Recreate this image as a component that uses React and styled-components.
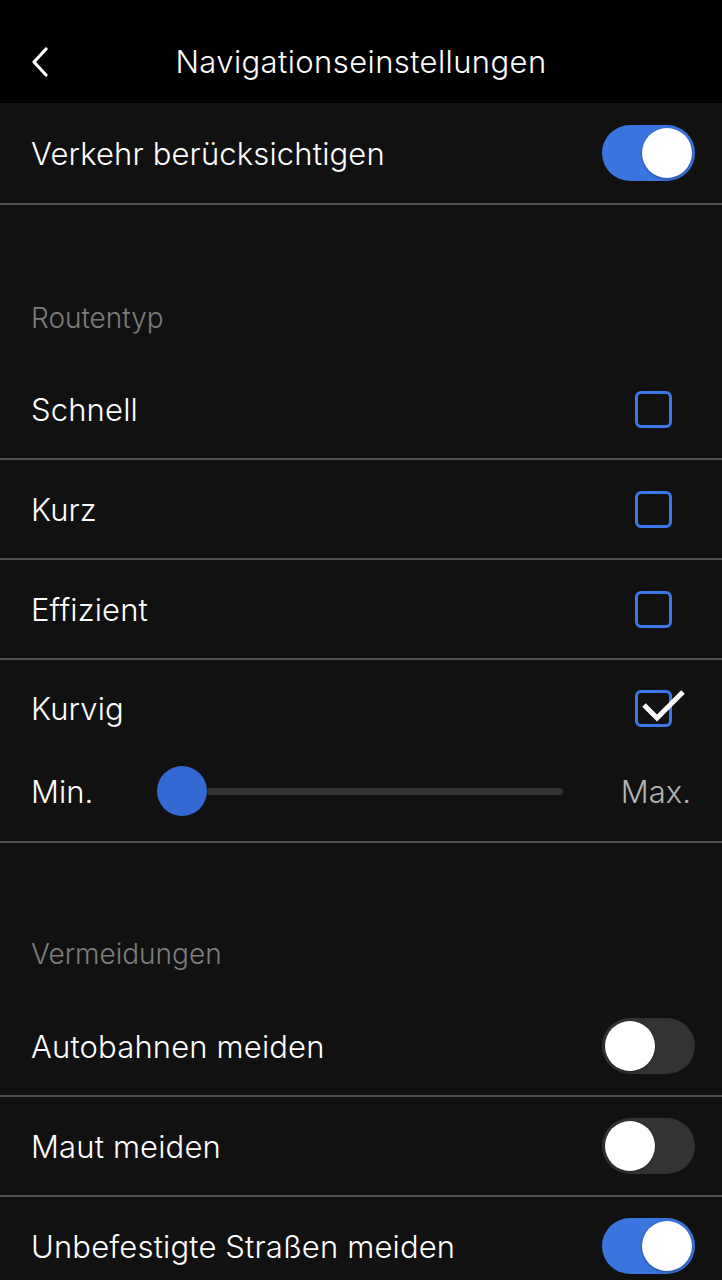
import React from 'react'
import styled, { createGlobalStyle } from 'styled-components'

const GlobalStyle = createGlobalStyle`
  body {
    margin: 0;
    background: #111111;
    font-family: Inter, "Noto Sans", sans-serif;
    -webkit-font-smoothing: antialiased;
  }
`

const Page = styled.div`
  width: 722px;
  height: 1280px;
  overflow: hidden;
  background: #111111;
  color: #fff;
`

const Header = styled.header`
  height: 103px;
  box-sizing: border-box;
  padding-top: 20px;
  background: #000;
  display: grid;
  grid-template-columns: 90px 1fr 90px;
  align-items: center;
`

const BackButton = styled.button`
  background: none;
  border: none;
  padding: 0 0 0 31px;
  display: flex;
  align-items: center;
  height: 100%;
  cursor: pointer;
`

const Title = styled.h1`
  margin: 0;
  text-align: center;
  font-size: 31px;
  font-weight: 300;
  color: #fff;
  letter-spacing: 0.4px;
`

const Row = styled.div`
  height: ${p => p.h || 98}px;
  display: flex;
  align-items: center;
  justify-content: space-between;
  padding: 0 27px 0 31px;
  border-bottom: ${p => (p.last ? 'none' : '2px solid #4f4f4f')};
`

const Label = styled.span`
  font-size: 31px;
  font-weight: 300;
  letter-spacing: 0.15px;
  color: #ffffff;
`

const SectionTitle = styled.div`
  height: ${p => p.h}px;
  display: flex;
  align-items: flex-end;
  padding: 0 31px;
  box-sizing: border-box;
  padding-bottom: ${p => p.pb}px;
  font-size: 28px;
  font-weight: 300;
  color: #7c7c7c;
`

const Toggle = styled.div`
  width: 93px;
  height: 56px;
  border-radius: 28px;
  background: ${p => (p.on ? '#3a74df' : '#333335')};
  display: flex;
  align-items: center;
  justify-content: ${p => (p.on ? 'flex-end' : 'flex-start')};
  padding: 0 3px;
  box-sizing: border-box;
`

const Knob = styled.div`
  width: 50px;
  height: 50px;
  border-radius: 50%;
  background: #fff;
  box-shadow: 0 1px 3px rgba(0, 0, 0, 0.35);
`

const Box = styled.div`
  position: relative;
  width: 37px;
  height: 37px;
  margin-right: 23px;
  border: 3px solid #3b78e8;
  border-radius: 6px;
  box-sizing: border-box;
`

const Check = styled.svg`
  position: absolute;
  left: 3px;
  top: -3px;
  overflow: visible;
`

const CurvyBlock = styled.div`
  height: 181px;
  border-bottom: 2px solid #4f4f4f;
`

const CurvyTop = styled.div`
  height: 96px;
  display: flex;
  align-items: center;
  justify-content: space-between;
  padding: 0 27px 0 31px;
`

const SliderRow = styled.div`
  height: 70px;
  display: flex;
  align-items: center;
  padding: 0 31px;
`

const SliderLabel = styled.span`
  font-size: 31px;
  font-weight: 300;
  color: ${p => p.color};
  width: ${p => (p.w ? `${p.w}px` : 'auto')};
  margin-left: ${p => (p.right ? 'auto' : '0')};
`

const Slider = styled.div`
  width: 406px;
  display: flex;
  align-items: center;
`

const Thumb = styled.div`
  width: 50px;
  height: 50px;
  border-radius: 50%;
  background: #3469d3;
  flex-shrink: 0;
`

const Bar = styled.div`
  flex: 1;
  height: 7px;
  border-radius: 4px;
  background: #333335;
`

const Checkbox = ({ checked }) => (
  <Box>
    {checked && (
      <Check width="46" height="30" viewBox="0 0 46 30">
        <path d="M3 15 L16 28 L42 2" fill="none" stroke="#fff" strokeWidth="5" strokeLinejoin="miter" />
      </Check>
    )}
  </Box>
)

const Switch = ({ on }) => (
  <Toggle on={on ? 1 : 0}>
    <Knob />
  </Toggle>
)

const App = () => {
  return (
    <Page>
      <GlobalStyle />
      <Header>
        <BackButton aria-label="Zurück">
          <svg width="18" height="30" viewBox="0 0 18 30">
            <path d="M15 2 L3 15 L15 28" fill="none" stroke="#fff" strokeWidth="3.2" strokeLinecap="round" strokeLinejoin="round" />
          </svg>
        </BackButton>
        <Title>Navigationseinstellungen</Title>
        <div />
      </Header>

      <Row h={100}>
        <Label>Verkehr berücksichtigen</Label>
        <Switch on />
      </Row>

      <SectionTitle h={155} pb={25}>Routentyp</SectionTitle>

      <Row>
        <Label>Schnell</Label>
        <Checkbox />
      </Row>
      <Row>
        <Label>Kurz</Label>
        <Checkbox />
      </Row>
      <Row>
        <Label>Effizient</Label>
        <Checkbox />
      </Row>

      <CurvyBlock>
        <CurvyTop>
          <Label>Kurvig</Label>
          <Checkbox checked />
        </CurvyTop>
        <SliderRow>
          <SliderLabel color="#ffffff" w={126}>Min.</SliderLabel>
          <Slider>
            <Thumb />
            <Bar />
          </Slider>
          <SliderLabel color="#b3b3b3" right>Max.</SliderLabel>
        </SliderRow>
      </CurvyBlock>

      <SectionTitle h={154} pb={26}>Vermeidungen</SectionTitle>

      <Row>
        <Label>Autobahnen meiden</Label>
        <Switch />
      </Row>
      <Row>
        <Label>Maut meiden</Label>
        <Switch />
      </Row>
      <Row last>
        <Label>Unbefestigte Straßen meiden</Label>
        <Switch on />
      </Row>
    </Page>
  )
}

export default App
